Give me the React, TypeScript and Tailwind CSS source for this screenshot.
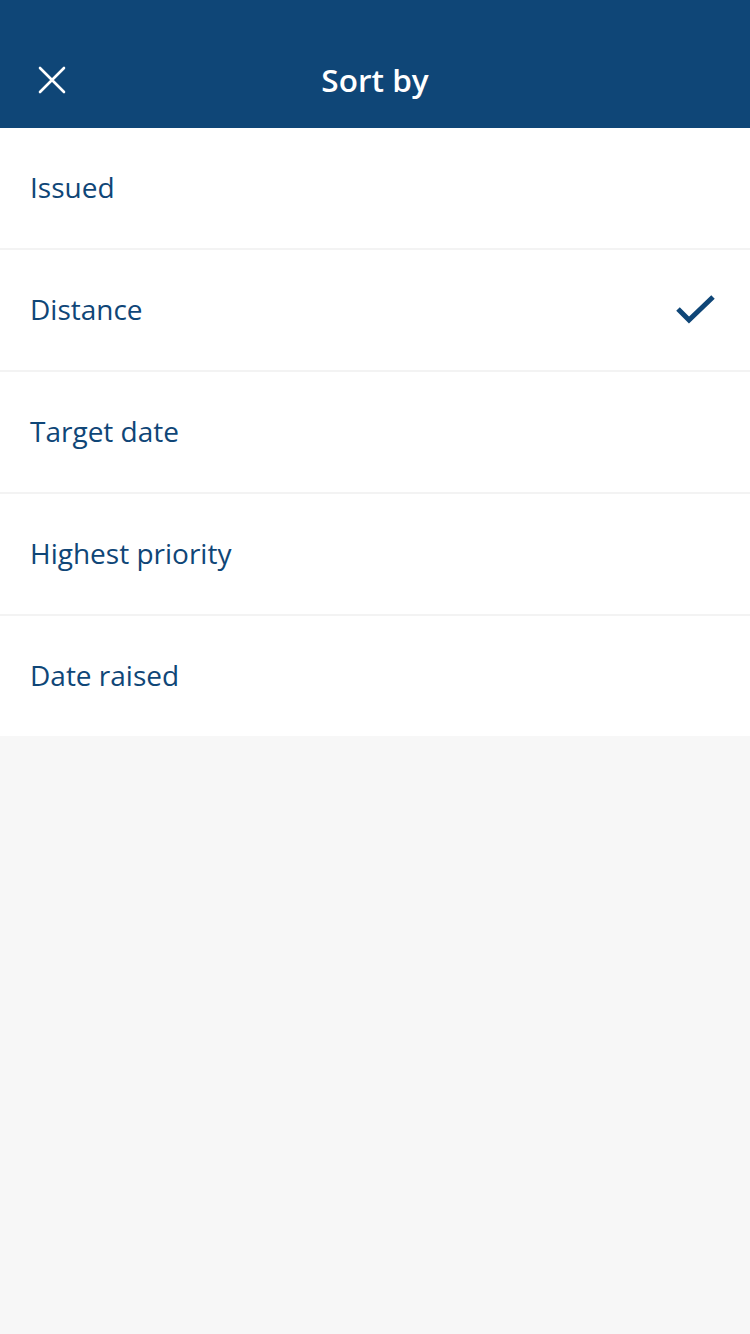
// Sort-by sheet: header with close button, list of sort options

const options = ['Issued', 'Distance', 'Target date', 'Highest priority', 'Date raised'];
const selected = 'Distance';

export default function App() {
  return (
    <div
      className="min-h-[1334px] w-full bg-[#f7f7f7]"
      style={{ fontFamily: '"Open Sans", "Noto Sans", sans-serif' }}
    >
      {/* Header */}
      <div className="relative flex h-[128px] items-center justify-center bg-[#0f4677] pt-[32px]">
        <button className="absolute left-[38px] top-[66px] flex h-[28px] w-[28px] items-center justify-center">
          <svg width="28" height="28" viewBox="0 0 28 28" fill="none">
            <path d="M2 2 L26 26 M26 2 L2 26" stroke="#fff" strokeWidth="2.6" strokeLinecap="round" />
          </svg>
        </button>
        <h1 className="text-[31.5px] font-semibold text-white">Sort by</h1>
      </div>

      {/* Options */}
      <ul className="bg-white">
        {options.map((opt, i) => (
          <li
            key={opt}
            className={`box-content flex h-[120px] items-center justify-between pl-[30px] pr-[34px] ${
              i < options.length - 1 ? 'border-b-2 border-[#f3f3f3]' : ''
            }`}
          >
            <span className="mb-[3px] text-[28px] leading-none text-[#0f4677]">{opt}</span>
            {opt === selected && (
              <svg width="40" height="32" viewBox="0 0 40 32" fill="none">
                <path d="M2 15 L13 26 L37 3" stroke="#0f4677" strokeWidth="5" />
              </svg>
            )}
          </li>
        ))}
      </ul>
    </div>
  );
}
